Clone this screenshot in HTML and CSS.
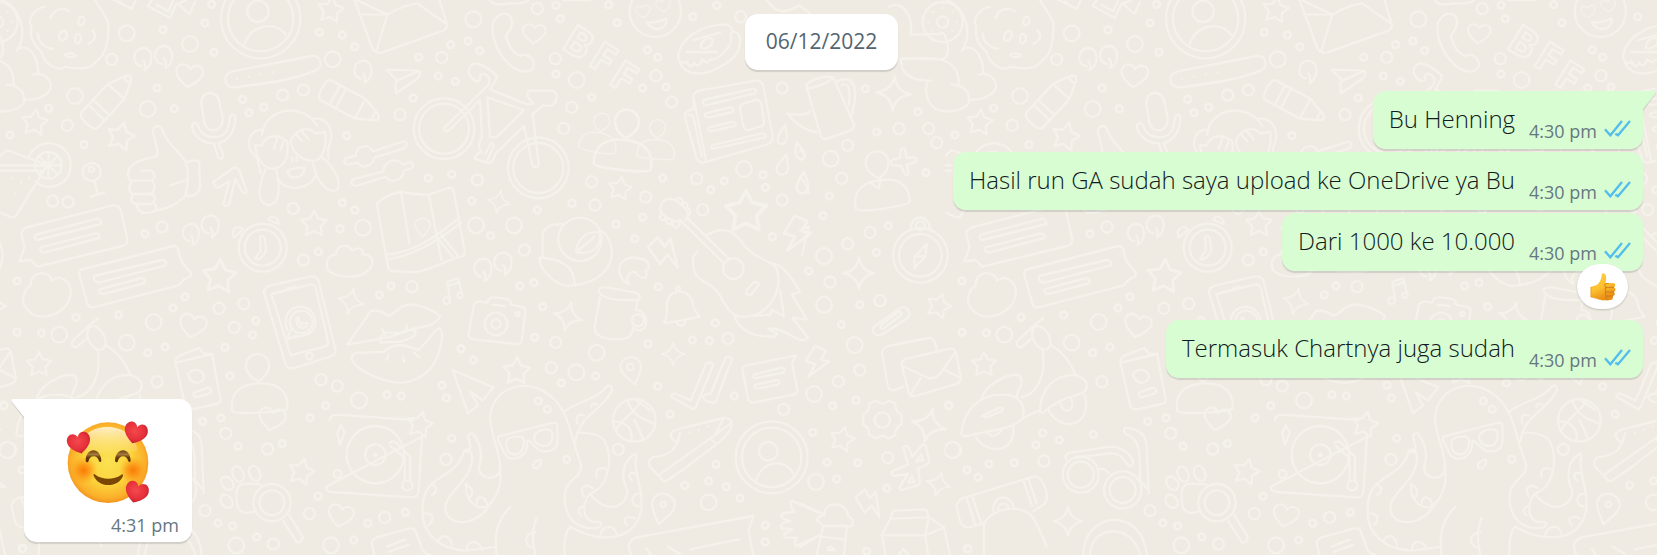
FILE: index.html
```html
<!DOCTYPE html>
<html lang="id">
<head>
<meta charset="utf-8">
<meta name="viewport" content="width=device-width, initial-scale=1">
<title>Chat</title>
<link rel="stylesheet" href="styles.css">
</head>
<body>
<svg class="wallpaper" aria-hidden="true">
  <defs>
    <path id="star" d="M0-40L12-17 38-12 20 7 24 33 0 21-24 33-20 7-38-12-12-17Z"/>
    <path id="spark" d="M0-46Q6-8 46 0Q6 8 0 46Q-6 8-46 0Q-6-8 0-46Z"/>
    <path id="heart" d="M0 36C-18 24-42 8-40-12C-36-34-10-36 0-18C10-38 38-36 40-12C40 8 14 26 0 36Z"/>
    <path id="comma" d="M-4 22C-34 18-32-30 2-32C36-30 32 22 6 34C8 26 10 14 2 6"/>
    <path id="pencil" d="M-90-32H20L72-10Q88 0 72 10L20 32H-90Q-104 32-104 0Q-104-32-90-32ZM20-32V32M-62-32V32M-42-32V32M66-12Q58 0 66 12"/>
    <path id="bolt" d="M-20-44L16-40 8-10 34-12-14 50-4 8-34 8Z"/>
    <path id="pin" d="M0 52C-20 24-36 6-34-14C-28-50 28-50 34-14C36 6 20 24 0 52Z"/>
    <path id="person" d="M0-16C-24-30-38-48-36-70C-30-112 30-112 36-70C38-48 24-30 0-16ZM-86 70C-92 8-48-10 0-10C48-10 92 8 86 70C86 84-86 84-86 70Z"/>
    <g id="avatar"><circle r="108"/><circle r="89"/><circle cx="-10" cy="-18" r="28"/><path d="M-48 72C-30 10 38 0 64 48"/></g>
    <g id="dots">
      <path id="dots-l" d="M380 100h0M570 132h0M225 288h0M998 178h0M1089 683h0M443 327h0M1420 58h0M1730 240h0M2232 507h0M1428 676h0M1542 676h0M2492 476h0M2472 768h0M461 966h0M178 1004h0M380 1028h0M1077 1201h0M22 1350h0M993 1636h0M709 1636h0M1790 1058h0M1729 1117h0M2442 1182h0M2472 914h0M2564 1035h0M2860 1350h0M2448 1446h0M2126 1507h0"/>
      <path id="dots-m" d="M335 178h0M848 285h0M910 270h0M202 376h0M158 603h0M204 606h0M486 681h0M879 625h0M910 780h0M1200 344h0M1325 172h0M1612 26h0M1666 176h0M1968 227h0M2015 306h0M1715 322h0M1691 385h0M1775 545h0M1785 615h0M1937 591h0M2090 536h0M2347 264h0M2347 600h0M1573 750h0M1432 540h0M2108 629h0M2222 50h0M2697 386h0M2786 386h0M2525 535h0M2543 436h0M2810 428h0M2543 731h0M2610 697h0M731 911h0M657 925h0M703 982h0M471 1145h0M677 1300h0M803 1347h0M963 1139h0M1012 1158h0M615 1532h0M1154 1552h0M928 1541h0M820 1632h0M1236 860h0M1667 1027h0M1654 1103h0M2184 1015h0M1338 1378h0M1855 1348h0M2351 1228h0M2490 846h0M2579 1110h0M2663 1373h0M2640 902h0M2515 1144h0M3132 1383h0"/>
      <path id="dots-s" d="M635 13h0M615 69h0M489 89h0M642 157h0M471 264h0M523 326h0M146 325h0M30 405h0M252 434h0M728 298h0M747 338h0M791 322h0M958 97h0M1027 105h0M1064 140h0M1040 407h0M1027 608h0M1064 630h0M1020 686h0M955 755h0M435 701h0M1668 16h0M1681 56h0M1851 68h0M1826 14h0M2078 50h0M2150 16h0M1942 150h0M1973 172h0M1928 264h0M1998 261h0M1775 292h0M1668 222h0M1352 134h0M1404 123h0M1439 152h0M1256 172h0M1315 228h0M1366 244h0M1240 294h0M1285 534h0M1355 523h0M1415 603h0M1612 630h0M1472 707h0M1716 610h0M1988 534h0M2132 569h0M2173 543h0M2296 562h0M2289 524h0M1928 652h0M1848 673h0M1904 716h0M2317 710h0M2426 813h0M2596 266h0M2753 335h0M2630 396h0M2778 518h0M2488 588h0M2469 647h0M2665 677h0M2629 757h0M51 843h0M228 952h0M356 945h0M519 924h0M555 890h0M51 997h0M124 999h0M443 1058h0M495 1041h0M675 1042h0M767 962h0M758 1005h0M690 1128h0M663 1254h0M608 1264h0M714 1339h0M847 1331h0M654 1569h0M698 1578h0M770 1611h0M1061 1620h0M1103 1570h0M954 1489h0M930 1253h0M977 1217h0M1161 1184h0M1204 1188h0M1173 858h0M1138 885h0M68 1646h0M11 1217h0M1559 858h0M1602 848h0M1628 920h0M1604 1012h0M1383 1046h0M1420 1080h0M1326 1156h0M1339 1194h0M1355 1315h0M1684 1149h0M1787 1128h0M1975 860h0M1944 1031h0M2077 1020h0M2128 1022h0M2146 969h0M1973 1159h0M2010 1243h0M2203 1188h0M2438 1297h0M2148 1393h0M2126 1443h0M2054 1456h0M2179 1460h0M2220 1494h0M2296 1576h0M2296 1626h0M1216 1537h0M1700 1378h0M1642 1228h0M1615 1203h0M2579 914h0M2524 974h0M2498 1217h0M2568 1201h0M2846 1215h0M2481 1387h0M2573 1388h0M2510 1437h0M2660 1465h0M2600 1654h0M3128 1299h0M3108 1335h0M3178 1320h0M3280 1303h0M3043 1388h0M2967 1392h0M2901 1410h0M2934 1432h0M2902 1645h0"/>
    </g>

    <g id="art">
      <g class="dot-rim"><use href="#dots"/></g>
      <g class="dot-core"><use href="#dots"/></g>

      <!-- top left -->
      <path d="M340 0L395 26 408 0M372 14L360 4M455 0L443 18 510 54 530 10M470 14L505 34 520 0M535 12L568 42 585 6M540 8L560 0"/>
      <g transform="translate(782 56)"><circle r="119"/><circle r="98"/><circle cx="-8" cy="-22" r="32"/><path d="M-50 80C-30 18 42 4 76 48"/></g>
      <use href="#star" transform="translate(992 30) rotate(8)"/>
      <path d="M1064 0L1117 145Q1126 160 1145 158L1330 92Q1342 86 1340 70L1318 0M1076 43L1162 44M1070 0L1162 44 1128 156M1162 44C1190 26 1220 14 1252 10L1340 72"/>
      <use href="#comma" transform="translate(428 176)"/><use href="#comma" transform="translate(490 170)"/>
      <use href="#heart" transform="translate(568 226) rotate(8)"/>
      <use href="#pencil" transform="translate(334 290) rotate(-47) scale(1.05)"/>
      <path d="M698 214L936 168Q960 166 962 190Q962 206 946 212C880 240 800 250 702 262Q676 262 676 238Q676 220 698 214Z"/>
      <path class="thick" d="M711 236h0M747 230h0M782 224h0M818 218h0"/>
      <use href="#comma" transform="translate(1088 214)"/>
      <path d="M1160 210Q1230 208 1260 214Q1264 224 1250 238L1188 280 1186 250 1192 242ZM1192 242L1254 214"/>
      <use href="#pencil" transform="translate(1062 316) rotate(28) scale(1.05)"/>
      <path d="M604 310C602 270 652 268 658 304L668 356C670 400 616 404 612 362ZM576 374C592 360 594 378 600 390C620 420 672 420 684 384L690 352C696 338 708 344 706 358C704 400 680 424 656 430L670 464C670 480 656 480 652 466L642 430C606 432 574 402 576 374Z"/>
      <use href="#star" transform="translate(104 368) rotate(6)"/><use href="#star" transform="translate(362 410) rotate(14) scale(1.08)"/>
      <circle cx="145" cy="496" r="40"/><path d="M86 472C110 406 212 420 212 496C210 560 140 576 108 546M145 456V536M105 496H185M117 468L173 524M173 468L117 524"/>
      <path d="M20 450L145 496H-30ZM0 512H132L46 650Q36 656 20 646L-60 610-30 512"/>
      <path class="thick" d="M38 534h0M64 548h0M88 534h0M46 580h0"/>
      <circle cx="275" cy="516" r="27"/><circle cx="274" cy="508" r="8"/><path d="M284 544L292 580M272 590L312 578"/>
      <path d="M472 468C476 440 456 400 458 390C468 372 484 376 490 396C502 436 554 466 558 490C566 510 566 540 556 588C530 612 506 626 464 632M472 468C430 478 394 484 384 514C384 536 388 540 396 542H452C470 536 466 516 448 512H424M396 542C382 560 388 580 400 582H450C468 574 466 546 452 542M400 582C386 604 400 612 410 612H452C472 600 466 584 450 582M410 612C416 640 426 644 464 634Q472 624 464 612M510 556L560 540M558 488C580 478 600 478 598 494L600 560C596 590 572 588 556 588"/>
      <path d="M786 404C796 320 910 306 952 378M786 390C750 384 728 440 768 470M936 356C980 350 1010 390 984 444M764 436L786 436C794 408 828 398 862 424C868 470 852 510 810 506C786 500 770 470 764 436ZM872 424C884 388 926 376 946 400L976 396C980 440 968 478 944 482C906 484 876 458 872 424ZM822 446L832 414M842 450L852 420M888 402L906 424M902 390L926 418M868 512C880 500 902 506 914 502C914 540 868 540 862 516ZM838 540C850 572 926 574 946 528M796 508C774 560 768 610 806 616C846 610 838 550 828 508M938 486C952 560 990 580 1012 570C1030 540 990 490 966 472M770 468L782 520M984 444L986 474M876 474V484M890 472V482"/>
      <path d="M640 546L700 504Q714 500 720 516L740 574Q736 588 726 574L706 536 688 610Q680 626 670 612L688 544 654 564Q642 560 640 546Z"/>
      <path d="M1036 474L1066 468C1070 434 1108 430 1118 454L1206 426Q1222 422 1220 436Q1220 442 1204 448L1124 472C1116 504 1082 506 1074 488L1044 494Q1026 490 1036 474ZM1058 538L1150 514C1154 476 1196 474 1208 494L1230 486Q1244 490 1236 504L1212 512C1206 546 1168 550 1158 530L1068 558Q1046 554 1058 538Z"/>
      <path d="M80 682L338 616Q358 614 364 636L382 718Q384 734 366 738L112 800 92 780 58 784 74 742 64 704Q64 688 80 682ZM108 704L292 656Q304 658 304 672L112 720Q98 714 108 704ZM122 742L286 700Q302 702 298 714L132 758Q116 756 122 742Z"/>
      <use href="#comma" transform="translate(572 702) scale(.95)"/><use href="#comma" transform="translate(630 678)"/>
      <circle cx="788" cy="743" r="72"/><circle cx="788" cy="743" r="54"/><path d="M780 712Q788 702 794 714L798 746Q800 758 784 772Q770 784 766 774L782 752ZM806 660C808 642 838 650 836 672ZM702 712C690 690 712 672 730 688Z"/>
      <use href="#star" transform="translate(942 672)"/>
      <path d="M1130 610Q1166 580 1204 576Q1252 584 1288 584L1344 564Q1360 560 1362 578L1394 752Q1396 766 1384 770C1320 786 1290 814 1240 816L1184 814Q1166 814 1164 800ZM1158 764C1240 760 1310 708 1378 654M1162 778C1240 768 1312 724 1384 668M1310 712L1360 772M1324 706L1376 770"/>
      <path class="dash" d="M1204 580L1228 730M1288 590L1324 780"/><use href="#pin" transform="translate(1268 680) scale(.68 .6)"/>
      <path d="M984 810C972 778 992 762 1008 764C1008 732 1050 730 1056 752C1080 738 1092 748 1088 764C1120 762 1124 792 1108 808C1080 838 1010 836 984 810Z"/>
      <path d="M240 810L520 738Q532 738 536 752C540 790 560 800 572 818Q580 828 552 838L536 856 280 922Q266 924 262 910L240 832Q236 818 240 810ZM282 828L486 780Q504 784 498 796L296 848Q278 844 282 828ZM298 868L424 834Q438 836 432 850L310 882Q294 880 298 868Z"/>
      <use href="#star" transform="translate(658 830) rotate(4) scale(1.3)"/>

      <!-- top middle -->
      <path d="M1480 66C1500 30 1532 36 1536 64C1538 90 1520 96 1518 110C1526 140 1540 160 1560 168C1580 154 1600 176 1602 192C1600 220 1566 218 1548 208C1500 180 1468 110 1480 66Z"/>
      <use href="#heart" transform="translate(1602 100) rotate(6) scale(.85)"/>
      <g class="letters"><text x="1680" y="142" transform="rotate(32 1680 142)">B</text><text x="1760" y="192" transform="rotate(32 1760 192)">F</text><text x="1822" y="248" transform="rotate(32 1822 248)">F</text></g>
      <circle cx="1966" cy="34" r="77"/><path d="M1940 66C1960 72 1984 62 2000 56C2004 92 1954 98 1940 66Z"/><use href="#heart" transform="translate(1930 34) rotate(-8) scale(.55)"/><use href="#heart" transform="translate(1990 16) rotate(-8) scale(.55)"/>
      <path d="M1470 0C1480 20 1510 12 1530 10Q1580 12 1586 0M1690 0H1770M2300 0C2330 44 2360 40 2398 16L2430 40"/>
      <path d="M2034 170C2040 110 2110 74 2172 74C2196 72 2202 92 2192 104C2204 140 2150 184 2130 178C2124 194 2114 184 2106 178C2100 200 2092 200 2082 188C2076 204 2066 200 2060 184C2046 196 2036 184 2034 170ZM2040 190C2060 230 2112 228 2160 200C2210 176 2230 140 2216 102L2196 92M2102 142C2104 116 2132 108 2138 120C2138 142 2112 150 2102 142Z"/>
      <path class="dash" d="M2060 156L2150 156M2080 120L2160 98"/>
      <circle cx="1332" cy="386" r="91"/><circle cx="1332" cy="386" r="75"/><circle cx="1615" cy="504" r="91"/><circle cx="1615" cy="504" r="75"/>
      <path class="erase" d="M1334 382L1464 256Q1474 240 1462 228C1448 214 1438 222 1440 240C1420 252 1400 218 1408 204C1420 180 1448 190 1490 226Q1494 236 1470 268L1584 314 1592 312 1600 310 1584 292C1578 272 1590 270 1600 272H1652Q1670 274 1670 290C1668 320 1650 320 1630 316L1598 342 1616 488C1616 506 1598 504 1596 490L1572 378 1500 448C1476 462 1488 480 1468 490L1424 476C1424 464 1436 460 1444 456C1430 440 1440 420 1446 410L1440 300 1350 388Q1336 400 1332 388Z"/>
      <path d="M1462 292L1572 330 1492 410 1470 412ZM1456 460L1474 428Q1486 432 1480 442L1462 480"/>
      <use href="#person" transform="translate(1874 430) rotate(6)"/>
      <use href="#person" transform="translate(1798 405) rotate(10) scale(.65)"/><use href="#person" transform="translate(1970 425) rotate(4) scale(.65)"/>
      <use href="#person" class="erase" transform="translate(1874 430) rotate(6)"/>
      <path d="M2080 290Q2080 278 2098 272L2266 242Q2286 240 2290 258L2318 408Q2318 428 2300 434L2110 488Q2098 490 2090 476L2054 350Q2052 332 2080 328ZM2080 290L2118 480M2064 346Q2076 340 2080 352L2106 470M2110 300L2260 266Q2274 268 2264 280L2118 316Q2104 312 2110 300ZM2116 340L2190 322Q2206 324 2198 336L2126 352Q2110 350 2116 340ZM2126 382L2196 366Q2214 368 2204 378L2132 394Q2120 392 2126 382ZM2136 436L2286 400Q2302 402 2296 412L2142 446Q2130 446 2136 436ZM2220 324Q2220 314 2232 310L2266 300Q2282 298 2284 312L2292 364Q2292 378 2280 380L2248 390Q2234 392 2230 380Z"/>
      <path d="M2356 374C2330 410 2326 430 2344 432C2370 428 2358 400 2356 374ZM2390 428C2382 460 2386 476 2406 478C2424 470 2412 450 2390 428ZM2360 464C2322 500 2322 520 2346 524C2376 520 2360 490 2360 464ZM2412 516C2384 556 2384 576 2406 580C2436 572 2424 546 2412 516Z"/>
      <use href="#star" transform="translate(1860 566) rotate(10) scale(.9)"/><use href="#spark" transform="translate(1496 606) rotate(12) scale(.75)"/>
      <use href="#star" transform="translate(2238 636) scale(1.6)"/>
      <use href="#bolt" transform="translate(2392 702) rotate(16) scale(1.15)"/><use href="#bolt" transform="translate(1998 755) rotate(-52) scale(1.15)"/>
      <use href="#comma" transform="translate(1448 808)"/><use href="#comma" transform="translate(1508 790)"/>
      <circle cx="1740" cy="718" r="65"/><path d="M1688 672L1660 674Q1630 680 1628 710V774M1806 694C1856 730 1856 850 1700 858C1660 850 1620 810 1618 774C1680 772 1724 800 1724 854M1728 756C1730 720 1760 690 1800 698C1804 740 1780 766 1728 756ZM1728 756L1784 710"/>
      <path d="M1858 812C1856 780 1890 766 1920 776C1952 780 1952 810 1936 812C1950 840 1920 840 1906 816C1884 812 1876 840 1886 852Q1860 840 1858 812Z"/>
      <circle cx="2200" cy="806" r="31"/><path d="M2040 660L2172 790M2064 656L2186 776M2040 664C2010 666 1974 640 1982 620C1984 600 2010 590 2028 602C2070 630 2070 650 2056 660M1984 640C1970 660 1990 664 1998 656C1998 676 2012 676 2018 664C2016 686 2032 690 2040 670M2028 600C2040 584 2052 600 2046 612C2060 600 2070 618 2056 626C2076 620 2074 644 2062 644M2116 708C2160 680 2196 688 2220 720C2260 780 2310 776 2330 806C2350 870 2310 950 2230 950C2190 950 2180 920 2156 880C2130 840 2070 850 2080 770L2092 754M2320 790Q2360 800 2400 876L2376 884 2420 958 2378 954 2424 1014C2396 1040 2360 980 2304 986L2330 1000Q2330 1014 2300 1008C2260 1010 2214 990 2202 944M2340 870L2352 948 2316 930 2310 944 2264 948M2240 870L2262 846Q2280 846 2276 856L2252 884Q2236 888 2240 870Z"/>
      <!-- top seam -->
      <path d="M2418 254Q2456 224 2500 232L2562 374Q2564 388 2550 392L2482 416Q2466 420 2462 406ZM2418 266Q2460 262 2502 234M2506 246C2560 220 2580 260 2554 346M2524 256C2548 240 2552 280 2546 316M2360 340C2400 350 2430 340 2430 332M2364 342Q2400 390 2450 396"/>
      <use href="#spark" transform="translate(2681 280) rotate(4) scale(1.1)"/>
      <path d="M2668 20C2710 0 2740 50 2732 104L2820 102Q2830 90 2840 120C2850 160 2840 180 2820 178L2704 176C2700 210 2720 240 2782 242C2770 290 2790 340 2850 334C2890 330 2914 310 2906 298C2950 304 2990 280 2988 256C2984 232 2966 222 2950 222M2704 176C2780 172 2880 160 2876 254M2782 242Q2800 240 2782 242M2854 254C2880 254 2910 270 2906 298M2934 224C2960 220 2950 220 2950 222C2950 180 2930 130 2888 146M2840 0C2896 20 2920 100 2886 152"/>
      <circle cx="2828" cy="66" r="60"/><circle cx="2828" cy="66" r="17"/><path class="thick" d="M2828 24h0M2858 36h0M2870 66h0M2858 92h0M2798 92h0M2786 66h0M2798 36h0"/>
      <path d="M2970 20C2940 24 2914 60 2930 80C2920 110 2940 140 2960 156C2970 200 3014 214 3030 200C3070 210 3110 206 3124 184C3160 160 3160 110 3160 70C3150 40 3130 20 3120 0M2988 54C2992 30 3024 18 3044 34M3070 66C3072 44 3092 46 3088 66C3080 80 3070 76 3070 66ZM3012 110C3016 90 3036 86 3036 106C3030 126 3010 126 3012 110ZM3060 120C3060 96 3078 96 3078 118C3070 136 3062 134 3060 120ZM3100 132C3124 120 3124 100 3112 92M2948 100C2950 126 2970 146 2994 146M3030 164C3040 156 3060 160 3062 168C3050 174 3034 172 3030 164Z"/>
      <use href="#person" transform="translate(2640 550) rotate(-8) scale(.95)"/>
      <path class="erase" d="M2608 546L2636 566 2642 536"/>
      <path d="M2702 448Q2714 438 2716 450L2720 474 2744 472Q2756 480 2742 488L2720 494 2726 520Q2720 532 2712 518L2704 498 2680 496Q2664 490 2678 478L2700 474Z"/>
      <circle cx="2761" cy="766" r="82"/><circle cx="2761" cy="766" r="64"/><circle cx="2761" cy="677" r="13"/><path d="M2732 690C2730 640 2790 640 2790 690M2780 732L2744 770 2744 804 2776 768ZM2744 770L2776 768"/>
      <use href="#spark" transform="translate(2577 820)"/>
      <path d="M2400 450Q2430 470 2400 480M2400 530Q2430 570 2426 578L2400 580M2400 690L2426 680 2406 764"/>

      <!-- lower left -->
      <path d="M72 884C76 860 92 862 92 856C90 810 150 810 156 842C180 824 216 840 212 884C204 930 160 950 124 950C84 946 60 910 72 884Z"/>
      <use href="#heart" transform="translate(578 976) rotate(14)"/>
      <path d="M792 878Q790 862 812 856L928 830Q950 826 956 844L1006 1048Q1008 1066 990 1070L884 1104Q862 1108 856 1090ZM814 882L930 854Q944 850 948 868L984 1024Q986 1038 972 1040L872 1066ZM862 866L886 860"/>
      <circle cx="928" cy="1068" r="10"/><circle cx="904" cy="966" r="34"/><path d="M872 990L862 1016 894 1010M862 990C846 950 870 920 904 920C950 924 964 986 920 1004C900 1014 890 1006 884 1008M888 956C890 990 920 990 924 970L910 968 906 974 896 962V952Z"/>
      <use href="#spark" transform="translate(1052 904) rotate(14) scale(.85)"/>
      <path d="M1042 1034L1112 934Q1130 926 1160 944C1180 956 1190 914 1230 914C1260 912 1306 934 1320 948C1310 980 1260 980 1240 986L1166 1012ZM1142 1028Q1132 1010 1158 998L1200 998Q1226 986 1246 992V1006Q1210 1030 1170 1026ZM1054 1076Q1056 1058 1080 1058L1150 1056C1180 1030 1210 1030 1254 1050C1290 1020 1300 990 1318 984Q1334 1000 1320 1044C1300 1140 1210 1160 1160 1142C1120 1130 1070 1110 1054 1076ZM1146 988L1158 1008M1220 974V994M1210 1070L1212 1086M1166 1062L1160 1080M1240 1056L1258 1072"/>
      <use href="#person" transform="translate(776 1160) rotate(-3) scale(.97)"/><use href="#heart" class="erase" transform="translate(816 1256) rotate(12) scale(.98)"/>
      <path d="M526 1088Q526 1074 540 1066L598 1044 612 1062 636 1062 662 1200Q660 1210 650 1212L576 1228Q562 1230 556 1218ZM526 1088L638 1062M564 1122C580 1100 610 1110 612 1130C608 1156 568 1154 564 1122ZM582 1178L626 1162Q638 1168 630 1180L590 1192Q576 1188 582 1178Z"/>
      <path d="M990 1260Q992 1244 1010 1244L1240 1260M1266 1310L1256 1470Q1254 1494 1236 1492L996 1476Q976 1474 978 1460ZM1012 1298L1022 1276 1034 1298 1020 1334ZM1168 1330Q1180 1318 1190 1330L1230 1370V1440M1172 1338L1214 1374V1440"/>
      <circle cx="1126" cy="1364" r="86"/><circle cx="1126" cy="1364" r="31"/><circle cx="1126" cy="1364" r="4"/><circle cx="1222" cy="1456" r="15"/><circle cx="1013" cy="1422" r="12"/>
      <use href="#star" transform="translate(1260 1274) rotate(12)"/><use href="#star" transform="translate(904 1416) rotate(14)"/>
      <circle cx="816" cy="1508" r="56"/><circle cx="816" cy="1508" r="37"/><path d="M784 1454C740 1450 706 1440 710 1490C706 1540 736 1546 768 1532M850 1564L890 1626Q906 1630 908 1610L868 1546"/>
      <ellipse cx="682" cy="1450" rx="16" ry="22" transform="rotate(-40 682 1450)"/><ellipse cx="714" cy="1422" rx="16" ry="24" transform="rotate(-24 714 1422)"/><ellipse cx="764" cy="1420" rx="16" ry="24" transform="rotate(-24 764 1420)"/><ellipse cx="680" cy="1504" rx="16" ry="22" transform="rotate(-40 680 1504)"/>
      <use href="#heart" transform="translate(1022 1546) rotate(14) scale(.95)"/>
      <path d="M1116 1634Q1112 1620 1130 1612L1226 1586Q1242 1582 1248 1596L1264 1640Q1268 1660 1290 1664M1116 1634L1124 1666M1160 1640L1216 1618M1166 1656L1226 1634"/>

      <!-- lower middle -->
      <circle cx="1340" cy="902" r="10"/><circle cx="1380" cy="886" r="8"/><path d="M1350 896L1342 846 1374 834 1386 880M1342 858L1376 848"/>
      <path d="M1220 924Q1222 904 1240 904L1262 908Q1266 890 1286 892L1316 896Q1334 898 1332 914L1362 920Q1378 922 1376 936L1366 1016Q1364 1034 1348 1032L1222 1018Q1204 1016 1206 1000Z" transform="translate(200 0)"/>
      <circle cx="1488" cy="972" r="34"/><circle cx="1488" cy="972" r="14"/><circle cx="1552" cy="942" r="6"/><path d="M1478 914L1514 918"/>
      <use href="#spark" transform="translate(1704 950) rotate(14) scale(.95)"/><use href="#spark" transform="translate(2020 1062) scale(.75)"/>
      <path d="M1796 870Q1800 856 1840 866L1906 878Q1924 884 1918 898Q1880 904 1830 896Q1796 886 1796 870ZM1800 892L1784 980C1780 1010 1820 1020 1860 1018C1890 1016 1900 1000 1898 982M1912 906L1908 930C1940 930 1950 980 1924 990Q1908 994 1898 982"/><circle cx="1914" cy="961" r="18"/>
      <path d="M1992 968Q2004 948 2000 920C2002 890 2014 880 2034 874C2060 874 2076 890 2080 918Q2084 934 2100 950Q1996 972 1992 968ZM2030 968Q2044 990 2058 962"/><circle class="thick" cx="2034" cy="866" r="6"/>
      <path d="M1358 1110L1480 1162 1448 1202 1412 1176 1434 1216 1404 1240Z"/>
      <use href="#star" transform="translate(1550 1114) rotate(2) scale(1.05)"/>
      <use href="#pin" transform="translate(1894 1108) rotate(-14) scale(.9)"/><circle cx="1891" cy="1101" r="10"/><use href="#pin" transform="translate(1988 1522) rotate(14)"/><circle cx="1990" cy="1513" r="8"/>
      <path d="M2014 1188Q2020 1176 2030 1182L2072 1202 2118 1092Q2128 1082 2140 1094L2088 1220 2080 1228 2014 1190ZM2108 1192Q2114 1180 2132 1182L2176 1074Q2190 1066 2196 1078L2146 1208Q2120 1210 2108 1192Z"/>
      <path d="M2228 1112Q2224 1100 2240 1096L2388 1066 2376 1090 2392 1170Q2392 1180 2380 1184L2260 1208Q2248 1208 2244 1196ZM2262 1124L2346 1102Q2360 1106 2350 1118L2270 1134Q2256 1134 2262 1124ZM2266 1154L2330 1140Q2344 1144 2334 1154L2274 1166Q2260 1164 2266 1154Z"/>
      <use href="#bolt" transform="translate(2452 1086) rotate(16)"/>
      <circle cx="1903" cy="1261" r="64"/><path d="M1882 1200C1900 1260 1950 1260 1966 1274M1926 1202C1900 1240 1840 1280 1850 1296M1842 1264C1880 1264 1900 1290 1894 1324M1910 1202L1950 1230M1904 1260L1930 1318"/>
      <path d="M2012 1306Q2010 1294 2040 1286L2170 1254Q2200 1252 2194 1280C2180 1320 2120 1350 2060 1402L2000 1442Q1990 1446 1982 1434L1950 1400Q1940 1372 1970 1370C2010 1364 2030 1350 2040 1300M1978 1424L2130 1316 2192 1270M2130 1316L2148 1330M2146 1302L2170 1256M2012 1306Q2020 1330 2036 1324"/>
      <path class="thick" d="M2070 1298h0M2096 1290h0M2124 1280h0"/>
      <use href="#avatar" transform="translate(2315 1372)"/>
      <path d="M1500 1414C1506 1360 1470 1310 1470 1250C1480 1140 1630 1120 1690 1236C1710 1270 1716 1320 1742 1390C1752 1440 1690 1430 1694 1500C1700 1580 1760 1590 1798 1582Q1810 1566 1794 1566C1750 1570 1740 1520 1770 1480C1830 1460 1840 1370 1812 1320Q1790 1296 1732 1298M1690 1236C1740 1200 1790 1200 1822 1158Q1838 1154 1836 1172C1800 1240 1740 1240 1726 1324M1770 1480C1810 1540 1880 1530 1882 1470C1860 1430 1870 1380 1904 1362Q1912 1360 1908 1374C1900 1420 1930 1460 1924 1530C1900 1640 1780 1620 1710 1580Q1690 1600 1694 1670"/>
      <path d="M1500 1414C1480 1450 1430 1430 1438 1398C1450 1360 1440 1330 1420 1302Q1408 1296 1404 1310C1420 1360 1406 1360 1392 1352C1370 1440 1270 1420 1268 1520C1260 1600 1320 1650 1400 1652L1490 1640M1392 1352Q1410 1340 1416 1370C1420 1440 1330 1480 1336 1530C1350 1590 1440 1570 1468 1514C1500 1480 1504 1440 1500 1414M1400 1450C1390 1500 1430 1530 1464 1520M1532 1520C1500 1550 1480 1590 1490 1665M1610 1554Q1590 1600 1606 1665"/>
      <path d="M1494 1310L1660 1268Q1676 1266 1672 1290C1676 1340 1670 1356 1630 1354C1600 1350 1600 1322 1582 1322C1584 1350 1570 1378 1532 1376C1510 1370 1508 1340 1494 1322ZM1518 1330Q1520 1310 1550 1310Q1576 1306 1572 1330Q1566 1368 1538 1362Q1520 1358 1518 1330ZM1602 1310Q1610 1288 1640 1288Q1660 1288 1658 1310Q1654 1340 1630 1338Q1604 1336 1602 1310Z"/>
      <path d="M1298 1454Q1320 1470 1296 1484M1274 1540C1306 1540 1300 1560 1286 1576M1316 1620C1330 1600 1350 1606 1356 1636M1400 1650C1400 1616 1440 1620 1446 1650M1430 1510C1430 1480 1460 1490 1462 1520M1396 1454C1420 1460 1420 1484 1408 1494M1606 1596C1570 1600 1570 1640 1602 1644M1752 1490C1734 1460 1760 1450 1778 1464M1790 1432C1784 1406 1800 1400 1820 1408M1896 1442C1880 1424 1890 1414 1904 1420M1922 1480C1890 1480 1890 1514 1916 1520M1880 1576C1860 1550 1890 1546 1904 1556M1800 1608C1806 1576 1840 1570 1850 1602M1732 1270C1726 1246 1736 1240 1752 1246M1774 1222Q1774 1206 1792 1214M1746 1520Q1726 1530 1744 1546M1600 1404Q1592 1386 1622 1378Q1628 1390 1612 1404Z"/>
      <path d="M2260 1548L1910 1612Q1886 1620 1886 1640L1894 1670M2260 1548L2246 1590 2260 1670M2070 1648L2216 1618M1940 1646L1956 1670M2004 1640L2040 1662"/>
      <path d="M2460 1540L2376 1502Q2364 1506 2382 1536L2346 1540Q2336 1554 2372 1564Q2340 1566 2344 1584L2378 1588Q2346 1600 2354 1612L2392 1614Q2378 1632 2388 1638L2460 1606"/>

      <!-- lower seam -->
      <path d="M2622 980L2704 922Q2726 918 2728 946L2726 952 2650 1002Q2626 1014 2618 990ZM2644 974L2696 936Q2710 936 2702 946L2650 986Q2636 986 2644 974Z"/>
      <use href="#star" transform="translate(2816 918) rotate(18) scale(.95)"/><use href="#star" transform="translate(2952 1094) scale(.95)"/><use href="#star" transform="translate(2526 1318) rotate(14) scale(.95)"/>
      <path d="M2710 1160L2684 1170Q2668 1172 2664 1160L2646 1060Q2646 1044 2664 1038L2786 1014Q2802 1014 2806 1030L2810 1048M2706 1098Q2702 1080 2720 1076L2850 1046Q2864 1044 2868 1058L2882 1130Q2884 1148 2868 1152L2746 1188Q2730 1192 2726 1178ZM2706 1098L2786 1134Q2810 1138 2824 1116L2866 1056M2734 1180L2762 1134M2834 1110L2878 1132"/>
      <use href="#bolt" transform="translate(2612 1508) rotate(-46)"/>
      <use href="#spark" transform="translate(2786 1276) rotate(14) scale(1.1)"/><use href="#spark" transform="translate(2816 1452) rotate(14) scale(.8)"/><use href="#spark" transform="translate(3204 1564) scale(.95)"/>
      <circle cx="2647" cy="1260" r="23"/><path d="M2630 1202Q2646 1220 2666 1202L2686 1210Q2684 1234 2704 1242V1274Q2684 1284 2686 1304L2666 1316Q2646 1298 2630 1316L2606 1304Q2610 1284 2590 1274V1242Q2610 1234 2608 1210Z"/>
      <path d="M2710 1342Q2722 1332 2728 1346L2736 1370 2766 1336Q2776 1330 2778 1342L2788 1384Q2786 1394 2754 1406L2760 1446Q2758 1456 2746 1458L2706 1470Q2696 1468 2702 1456L2724 1422 2682 1428Q2668 1420 2680 1412L2724 1394ZM2748 1384L2764 1362 2770 1380ZM2736 1428L2724 1448 2744 1446Z"/>
      <path d="M2400 1510L2470 1542M2400 1640L2460 1606M2474 1546C2470 1500 2540 1504 2544 1546L2558 1558V1576L2540 1582 2532 1665M2474 1546Q2450 1548 2452 1562L2470 1578 2450 1665M2462 1610L2532 1618M2470 1578H2540M2484 1650Q2484 1630 2506 1650Z"/>
      <path d="M2674 1550L2680 1532 2778 1528 2786 1552 2832 1582 2850 1665M2674 1550L2646 1604 2656 1665M2674 1556L2786 1552M2646 1606H2776L2786 1552M2776 1606L2832 1582M2776 1606L2784 1665M2696 1665L2710 1646 2726 1665"/>
      <path d="M2884 1300C2890 1230 2940 1180 3010 1184C3060 1184 3084 1220 3064 1260C3030 1290 2970 1290 2900 1308Q2884 1310 2884 1300ZM2946 1190C2970 1140 3040 1116 3060 1128C3076 1150 3050 1170 3050 1192M3066 1192C3110 1180 3140 1130 3128 1050M3154 1036Q3204 1066 3226 1124M3120 1238C3120 1160 3170 1120 3230 1126C3270 1140 3270 1174 3234 1184C3190 1194 3160 1210 3130 1238ZM3066 1256L3120 1230M2928 1310C2950 1360 3050 1370 3040 1274M2964 1300Q2984 1318 3008 1288M3146 1230C3180 1300 3280 1280 3254 1186M3182 1210C3190 1250 3230 1230 3214 1196M2946 1248L3000 1222Q3016 1224 3004 1234L2958 1252Z"/>
      <ellipse cx="3124" cy="1014" rx="24" ry="38" transform="rotate(-28 3124 1014)"/><path d="M3098 980L3050 1026Q3050 1044 3064 1042L3092 1018M3098 980L3130 954"/>
      <circle cx="3242" cy="1424" r="39"/><circle cx="3242" cy="1424" r="54"/><circle cx="3368" cy="1470" r="39"/><circle cx="3368" cy="1470" r="56"/><path d="M3200 1380Q3190 1360 3212 1358L3330 1340C3370 1340 3400 1370 3400 1390Q3392 1406 3382 1392C3370 1370 3350 1358 3330 1360L3230 1372M3294 1408Q3316 1402 3326 1420M3376 1282Q3366 1294 3380 1304C3416 1316 3420 1340 3420 1440M3376 1282Q3440 1290 3440 1340L3446 1480M3420 1440L3446 1472"/>
      <path d="M2870 1520Q2872 1500 2890 1494L3100 1430Q3120 1424 3134 1460Q3150 1500 3128 1516L3100 1534M2870 1520L2880 1564Q2888 1584 2910 1582L2950 1570M2900 1494L2926 1576M2916 1488L2944 1570M3070 1442L3096 1518M3086 1438L3110 1510M2952 1665V1570C2980 1520 3070 1510 3100 1554Q3120 1590 3140 1640M2980 1534C2976 1480 3036 1480 3042 1526M2994 1530C2996 1504 3022 1504 3026 1526"/>
      <path d="M3250 1665C3250 1530 3430 1520 3440 1665M3270 1665C3274 1570 3400 1570 3420 1665"/>
    </g>
    <pattern id="doodles" width="945" height="555" patternUnits="userSpaceOnUse">
      <g class="doodle" transform="scale(.333333)">
        <use href="#art" x="-2835"/><use href="#art"/>
      </g>
    </pattern>
  </defs>
  <rect width="100%" height="100%" fill="url(#doodles)"/>
</svg>

<svg class="sprite" aria-hidden="true">
  <symbol id="ticks" viewBox="0 0 81 51"><path d="M3 28L19 46 54 3M34 41L42 46 78 3"/></symbol>
</svg>

<main class="chat">
  <div class="day"><time class="date" datetime="2022-12-06">06/12/2022</time></div>
  <section class="messages">
    <article class="bubble out first">
      <svg class="tail" viewBox="0 0 13 20" aria-hidden="true"><path class="shade" d="M0 1H12Q14 2 12 4L0 20Z"/><path class="face" d="M0 0H11Q14 1 12 3L0 18Z"/></svg>
      <p>Bu Henning</p>
      <span class="meta"><time>4:30 pm</time><svg class="ticks" role="img" aria-label="Read"><use href="#ticks"/></svg></span>
    </article>
    <article class="bubble out">
      <p>Hasil run GA sudah saya upload ke OneDrive ya Bu</p>
      <span class="meta"><time>4:30 pm</time><svg class="ticks" role="img" aria-label="Read"><use href="#ticks"/></svg></span>
    </article>
    <article class="bubble out reacted">
      <p>Dari 1000 ke 10.000</p>
      <span class="meta"><time>4:30 pm</time><svg class="ticks" role="img" aria-label="Read"><use href="#ticks"/></svg></span>
      <button class="reaction" type="button" aria-label="Reaction: thumbs up">
        <svg viewBox="86 66 84 90" aria-hidden="true">
          <defs><linearGradient id="hand" x1="0" y1="0" x2=".4" y2="1"><stop offset="0" stop-color="#ffd042"/><stop offset=".6" stop-color="#fdc02f"/><stop offset="1" stop-color="#e98d16"/></linearGradient></defs>
          <path fill="url(#hand)" d="M91 110L108 106C117 99 124 88 124 74C126 67 134 68 137 78C138 88 137 94 136 99H158C167 100 166 110 160 112C168 115 167 124 160 126C166 130 164 137 157 138C160 145 156 150 148 150H126C114 150 106 142 91 142Z"/>
          <path fill="none" stroke="#c87516" stroke-width="2.5" stroke-linecap="round" d="M137 112H160M137 126H160M138 138H157M137 112C130 106 132 100 144 100M137 112Q131 118 137 126Q132 132 138 138Q134 146 142 150"/>
          <path fill="none" stroke="#e39a20" stroke-width="2" d="M92 111V141L112 146 126 150H146"/>
        </svg>
      </button>
    </article>
    <article class="bubble out">
      <p>Termasuk Chartnya juga sudah</p>
      <span class="meta"><time>4:30 pm</time><svg class="ticks" role="img" aria-label="Read"><use href="#ticks"/></svg></span>
    </article>
    <article class="bubble in">
      <svg class="tail" viewBox="0 0 13 20" aria-hidden="true"><path class="shade" d="M13 1H1Q-1 2 1 4L13 20Z"/><path class="face" d="M13 0H2Q-1 1 1 3L13 18Z"/></svg>
      <svg class="emoji" viewBox="45 25 261 261" role="img" aria-label="Smiling face with hearts">
        <defs>
          <radialGradient id="skin" cx=".5" cy=".48" r=".54"><stop offset="0" stop-color="#fbe152"/><stop offset=".55" stop-color="#fbd33c"/><stop offset=".85" stop-color="#fbb02a"/><stop offset="1" stop-color="#f08c1d"/></radialGradient>
          <radialGradient id="blush"><stop offset="0" stop-color="#fb7b05"/><stop offset=".4" stop-color="#fb8a10" stop-opacity=".75"/><stop offset="1" stop-color="#fba01b" stop-opacity="0"/></radialGradient>
          <linearGradient id="shine" x2="0" y2="1"><stop offset="0" stop-color="#fff5d8" stop-opacity=".9"/><stop offset="1" stop-color="#fcea98" stop-opacity=".15"/></linearGradient>
          <radialGradient id="red" cx=".45" cy=".4" r=".65"><stop offset="0" stop-color="#f5494d"/><stop offset=".65" stop-color="#e5303a"/><stop offset="1" stop-color="#b71f2c"/></radialGradient>
          <linearGradient id="brow" x2="0" y2="1"><stop offset="0" stop-color="#6e4410"/><stop offset=".35" stop-color="#a57a3a"/><stop offset=".6" stop-color="#6a3d08"/><stop offset="1" stop-color="#552f05"/></linearGradient>
          <path id="love" fill="url(#red)" d="M0 34C-18 24-36 10-35-9C-33-31-8-36 0-16C8-36 33-31 35-9C36 10 18 24 0 34Z"/>
        </defs>
        <circle cx="174" cy="156" r="121" fill="url(#skin)"/>
        <path fill="url(#shine)" d="M85 112C94 70 132 49 174 49C218 49 252 76 264 119C236 132 112 134 85 112Z"/>
        <circle cx="101" cy="179" r="42" fill="url(#blush)"/><circle cx="249" cy="179" r="42" fill="url(#blush)"/>
        <path fill="url(#brow)" d="M107 151C107 109 153 108 154 151Q151 156 147 152C143 132 119 132 115 153Q110 157 107 151ZM195 151C196 109 242 108 242 151Q239 156 235 152C230 132 208 132 203 153Q198 157 195 151Z"/>
        <path fill="#7a4705" d="M130 192Q132 188 137 193C158 208 192 208 213 193Q219 188 219 195C206 232 144 234 130 192Z"/>
        <use href="#love" transform="translate(87 95) rotate(-13)"/><use href="#love" transform="translate(257 65) rotate(17)"/><use href="#love" transform="translate(260 243) rotate(18)"/>
      </svg>
      <span class="meta"><time>4:31 pm</time></span>
    </article>
  </section>
</main>
</body>
</html>
```
FILE: styles.css
```css
* { box-sizing: border-box; }

body {
  position: relative;
  margin: 0;
  min-height: 100vh;
  overflow-x: hidden;
  background: #efeae2;
  color: #111b21;
  font-family: "Segoe UI", "Open Sans", "Noto Sans", sans-serif;
}

.wallpaper {
  position: absolute;
  inset: 0;
  width: 100%;
  height: 100%;
}

.doodle {
  fill: none;
  stroke: #f5f1eb;
  stroke-width: 7;
  stroke-linecap: round;
  stroke-linejoin: round;
}
.doodle .thick { stroke-width: 18; }
.doodle .dash { stroke-dasharray: 22 24; }
.doodle .erase { fill: #efeae2; }
.letters {
  font-family: "Open Sans", sans-serif;
  font-size: 120px;
  font-weight: 700;
}

#dots-l { stroke-width: var(--large); }
#dots-m { stroke-width: var(--medium); }
#dots-s { stroke-width: var(--small); }
.dot-rim { --large: 54px; --medium: 40px; --small: 28px; }
.dot-core { --large: 40px; --medium: 26px; --small: 12px; stroke: #efeae2; }

.sprite { position: absolute; width: 0; height: 0; }

.chat {
  position: relative;
  padding: 14px 14px 13px 0;
}

.day { display: flex; justify-content: center; }
.date {
  padding: 11px 21px 13px;
  border-radius: 13px;
  background: #fff;
  box-shadow: 0 2px 1px rgba(11, 20, 26, .13);
  color: #54656f;
  font-size: 21px;
  line-height: 32px;
}

.messages {
  display: flex;
  flex-direction: column;
  gap: 3px;
  padding: 21px 0 0 24px;
}

.bubble {
  position: relative;
  display: flex;
  align-items: flex-end;
  border-radius: 13px;
  box-shadow: 0 2px 1px rgba(11, 20, 26, .13);
}
.bubble p {
  margin: 0;
  font-size: 24px;
  font-weight: 300;
  line-height: 34px;
}

.out {
  align-self: flex-end;
  gap: 14px;
  padding: 11px 12px 6px 16px;
  background: #d9fdd3;
}
.out p { padding-bottom: 7px; }
.first { border-top-right-radius: 0; }
.reacted { margin-bottom: 46px; }

.in {
  align-self: flex-start;
  flex-direction: column;
  gap: 7px;
  width: 168px;
  margin-top: 18px;
  padding: 20px 13px 5px;
  border-top-left-radius: 0;
  background: #fff;
}

.meta {
  display: flex;
  align-items: center;
  gap: 7px;
  color: #667781;
  font-size: 18px;
  line-height: 24px;
  white-space: nowrap;
}

.ticks {
  width: 27px;
  height: 17px;
  margin-bottom: 6px;
  fill: none;
  stroke: #53bdeb;
  stroke-width: 7;
}

.tail {
  position: absolute;
  top: 0;
  width: 13px;
  height: 20px;
}
.out .tail { left: 100%; }
.in .tail { right: 100%; }
.shade { fill: rgba(11, 20, 26, .13); }
.out .face { fill: #d9fdd3; }
.in .face { fill: #fff; }

.emoji {
  align-self: center;
  width: 87px;
  height: 87px;
}

.reaction {
  position: absolute;
  right: 15px;
  bottom: -38px;
  display: grid;
  place-items: center;
  width: 51px;
  height: 45px;
  padding: 0;
  border: 0;
  border-radius: 23px;
  background: #fff;
  box-shadow: 0 1px 2px rgba(11, 20, 26, .2);
}
.reaction svg { width: 28px; height: 30px; }
```
